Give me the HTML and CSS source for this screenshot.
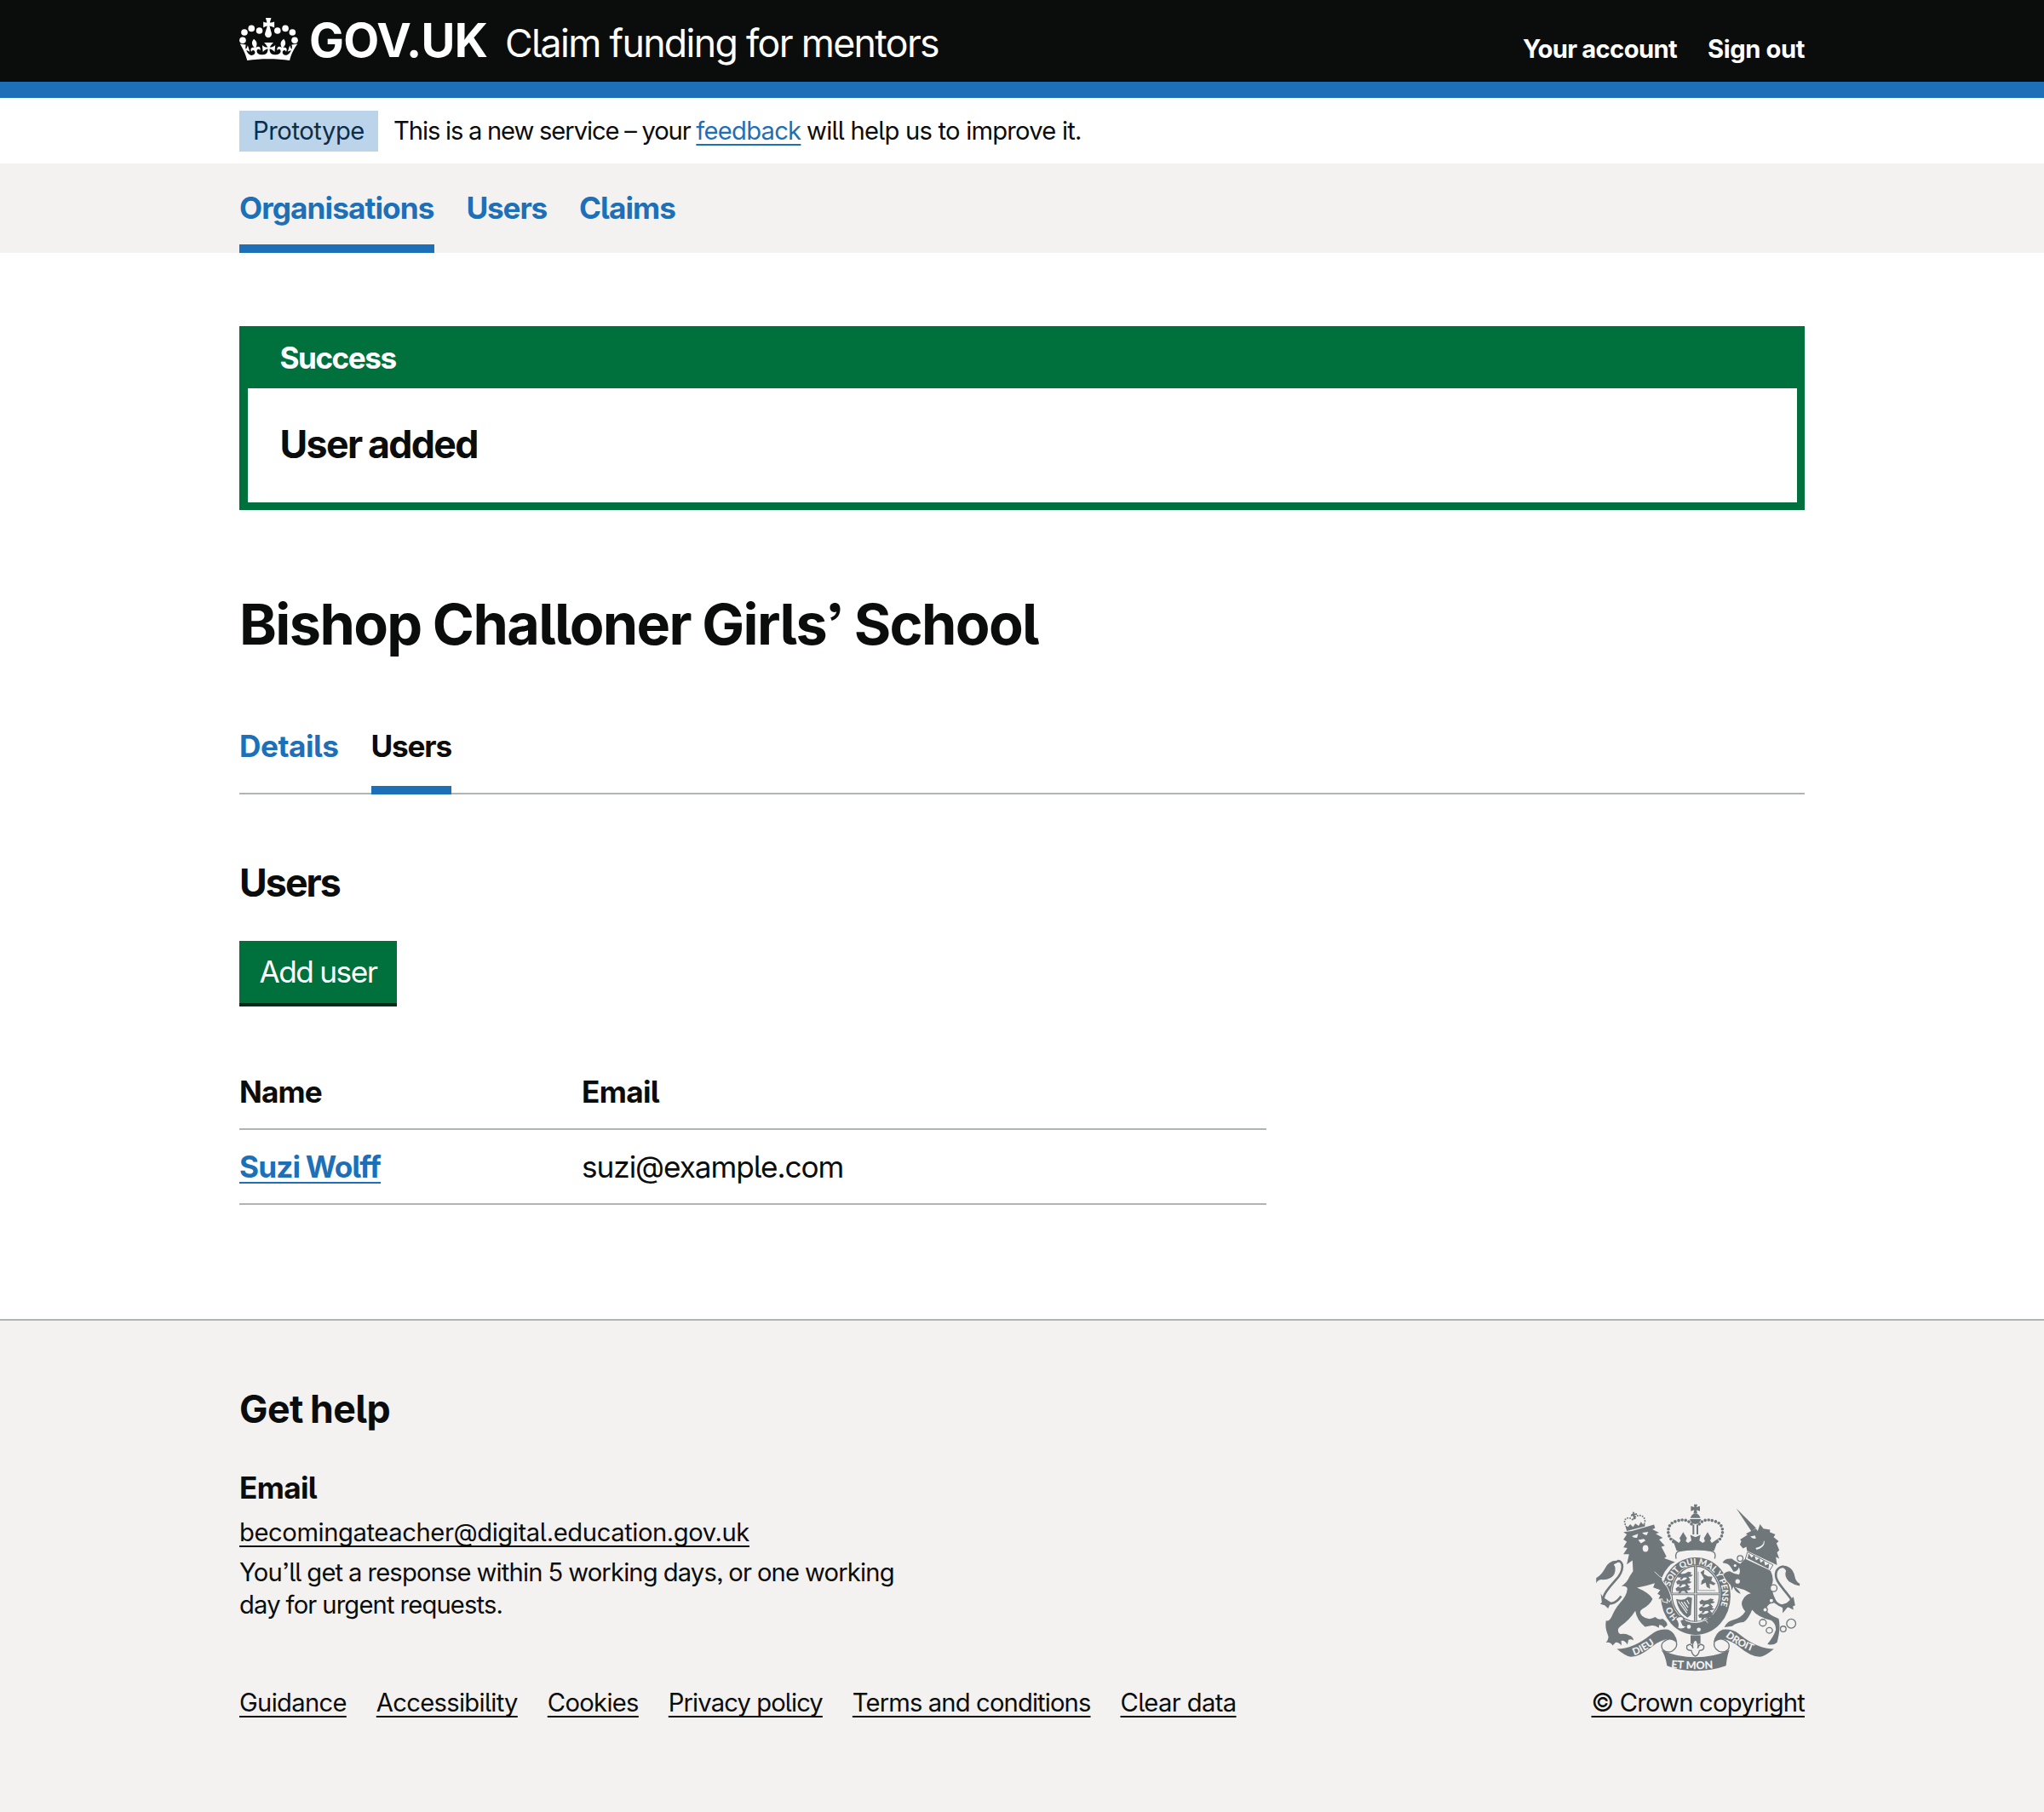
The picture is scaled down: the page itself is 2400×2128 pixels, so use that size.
FILE: index.html
```
<!DOCTYPE html>
<html lang="en">
<head>
<meta charset="utf-8">
<title>Bishop Challoner Girls’ School - Claim funding for mentors</title>
<link rel="stylesheet" href="styles.css">
</head>
<body>
<header class="header">
  <div class="container header-inner">
    <svg class="crown" viewBox="32 63 208 150" aria-hidden="true">
      <circle cx="44" cy="142" r="11.5"/><circle cx="50" cy="114" r="11.5"/><circle cx="75" cy="100" r="11.5"/><circle cx="103" cy="108" r="11.5"/>
      <circle cx="228" cy="142" r="11.5"/><circle cx="220" cy="114" r="11.5"/><circle cx="195" cy="100" r="11.5"/><circle cx="167" cy="108" r="11.5"/>
      <path d="M125 63H145L140 79Q147 80 156 76V97Q147 92 139 91L146 117A12 12 0 1 1 123 117L131 91Q123 92 117 97V76Q123 80 130 79Z"/>
      <path transform="translate(37.4 42) scale(6.1 5.7)" d="M16 29.2c4.4 0 8.6.3 12.3.8 1.1-4.5 2.4-7 4.6-10.3l-3.4.6c.2 1.3.3 1.9 0 2.7-.4-.4-.8-1.1-1.1-2.3l-1.2 4c.7-.5 1.3-.8 2-.9-1.1 2.5-2.6 3.1-3.500 3-1.1-.2-1.7-1.2-1.5-2.1.3-1.2 1.5-1.5 2.1-.1 1.1-2.3-.8-3-2-2.3 1.9-1.9 2.1-3.5.6-5.6-2.1 1.6-2.1 3.2-1.2 5.5-1.2-1.4-3.2-.6-2.5 1.6.9-1.4 2.1-.5 1.9.8-.2 1.1-1.7 2.1-3.5 1.9-2.7-.2-2.9-2.1-2.9-3.6.7-.1 1.9.5 2.9 1.9l.4-4.3c-1.1 1.1-2.1 1.4-3.2 1.4.4-1.2 2.1-3 2.1-3h-5.4s1.7 1.9 2.1 3c-1.1 0-2.1-.2-3.2-1.4l.4 4.3c1-1.4 2.2-2 2.9-1.9-.1 1.5-.2 3.4-2.9 3.6-1.9.2-3.4-.8-3.5-1.9-.2-1.3 1-2.2 1.9-.8.7-2.3-1.2-3-2.5-1.6.9-2.2.9-3.9-1.2-5.5-1.5 2-1.3 3.7.6 5.6-1.2-.7-3.1 0-2 2.3.6-1.4 1.8-1.1 2.1.1.2.9-.3 1.9-1.5 2.1-.9.2-2.4-.5-3.5-3 .6 0 1.2.3 2 .9l-1.2-4c-.3 1.1-.7 1.9-1.1 2.3-.3-.8-.2-1.4 0-2.7l-3.4-.6C1.300 23 2.600 25.500 3.700 30c3.700-.5 7.900-.8 12.300-.8"/>
    </svg>
    <span class="logotype">GOV.UK</span>
    <span class="service">Claim funding for mentors</span>
    <nav class="account">
      <a class="account-main">Your account</a>
      <a class="account-out">Sign out</a>
    </nav>
  </div>
</header>

<div class="container phase">
  <strong class="tag">Prototype</strong>
  <span class="phase-text">This is a new service – your <a class="link feedback">feedback</a> <span class="phase-end">will help us to improve it.</span></span>
</div>

<nav class="primary">
  <div class="container primary-list">
    <a class="primary-item organisations current">Organisations</a>
    <a class="primary-item users">Users</a>
    <a class="primary-item claims">Claims</a>
  </div>
</nav>

<main class="container main">
  <section class="banner">
    <h2 class="banner-title">Success</h2>
    <p class="banner-content">User added</p>
  </section>
  <h1 class="title">Bishop Challoner Girls’ School</h1>
  <nav class="tabs">
    <a class="tab details">Details</a>
    <a class="tab users selected">Users</a>
  </nav>
  <h2 class="subtitle">Users</h2>
  <button class="button" type="button">Add user</button>
  <div class="table">
    <div class="row head"><span class="th-name">Name</span><span class="th-email">Email</span></div>
    <div class="row"><span><a class="link user-link">Suzi Wolff</a></span><span class="email">suzi@example.com</span></div>
  </div>
</main>

<footer class="footer">
  <div class="container footer-grid">
    <div class="footer-main">
      <h2 class="help">Get help</h2>
      <h3 class="help-email">Email</h3>
      <p class="mail"><a class="link">becomingateacher@digital.education.gov.uk</a></p>
      <p class="response">You’ll get a response within 5 working days, or one working<br>day for urgent requests.</p>
      <div class="links">
        <a class="link">Guidance</a><a class="link">Accessibility</a><a class="link">Cookies</a><a class="link privacy">Privacy policy</a><a class="link terms">Terms and conditions</a><a class="link clear">Clear data</a>
      </div>
    </div>
    <div class="copyright">
      <svg class="crest" viewBox="42 50 720 592" aria-hidden="true">
        <defs>
          <path id="ring" d="M330 452A94 108 0 1 1 456 452"/>
          <path id="dieu" d="M176 585Q228 568 290 510"/>
          <path id="droit" d="M498 518Q548 560 626 582"/>
          <path id="mon" d="M290 627Q392 640 496 627"/>
          <path id="beast" d="M0 10l9-8 8 4 12-2 10-6 12 3-5 6 9 3-6 5-10 1 6 8-6 2-8-8-9 1-6 7h-7l4-8-9 1z"/>
        </defs>
        <!-- garter and shield -->
        <ellipse cx="393" cy="376" rx="123" ry="137" class="ink"/>
        <ellipse cx="393" cy="368" rx="88" ry="102" class="paper"/>
        <ellipse cx="393" cy="368" rx="84" ry="98" fill="none" stroke="#6f777b" stroke-width="4"/>
        <path class="ink" d="M387 268h11v96h80v8h-80v94h-11v-94h-80v-8h80z"/>
        <path d="M392.500 270V466M308 368H478" stroke="#f3f2f1" stroke-width="2.500"/>
        <g class="ink">
          <use href="#beast" x="328" y="292"/><use href="#beast" x="324" y="316"/><use href="#beast" x="322" y="340"/>
          <use href="#beast" x="406" y="386"/><use href="#beast" x="404" y="410"/><use href="#beast" x="402" y="434"/>
          <path d="M410 292l14-10-2 16 14 8 16 2-4 14 16 10-8 6-14-6 2 18-12-6-4-16-16 8 2-14 8-8z"/>
          <path d="M324 386Q350 394 366 378L380 382L376 442L364 452Q330 430 324 386Z"/>
        </g>
        <path d="M402 290V356H462" fill="none" stroke="#6f777b" stroke-width="2"/>
        <path d="M332 394L362 436M342 396L364 428M352 396L366 416M362 390L370 404" stroke="#f3f2f1" stroke-width="3.500"/>
        <text class="motto ring"><textPath href="#ring">HO</textPath></text>
        <text class="motto ring"><textPath href="#ring" startOffset="118">SOIT QUI MAL Y PENSE</textPath></text>
        <path class="paper" d="M322 456Q336 444 348 450L352 460L342 464L348 478L360 484Q344 498 328 488Q336 474 322 456Z" stroke="#6f777b" stroke-width="4"/>
        <circle cx="369" cy="484" r="7" class="paper"/><circle cx="404" cy="494" r="7" class="paper"/>
        <path d="M358 462Q394 478 424 458L436 470" fill="none" stroke="#f3f2f1" stroke-width="3"/>
        <!-- lion -->
        <g class="ink">
          <path class="outlined" d="M150 158L138 150L168 146L246 124L250 136L240 140L264 152L252 156L277 170L264 176L284 198L272 202L290 236L282 242L320 256Q304 262 296 274Q280 292 274 310Q270 322 290 342Q300 358 306 384L300 394L290 382L292 398L278 394L276 384L262 386L268 374L258 368L268 354L243 345L249 330Q225 338 186 346Q232 366 241 386Q232 408 204 422Q190 432 204 446Q226 464 250 450Q262 462 276 456Q292 466 293 478L282 488Q272 476 264 478L263 488Q250 478 238 480L214 484Q186 462 180 428Q160 460 128 482Q110 496 126 510Q148 506 158 514Q172 518 174 532Q164 526 156 530L152 547Q142 530 130 534L132 550Q118 536 110 540L100 550Q92 536 76 540Q90 526 82 510Q72 486 77 462Q86 468 96 450Q108 420 126 400Q150 376 152 350Q150 340 131 340Q150 330 160 306L172 288L170 250L150 264L158 228L138 228L152 206L138 204L150 184L138 176Z"/>
          <path d="M130 376C108 408 85 405 72 396C55 380 88 345 112 318C140 288 142 250 116 252" fill="none" stroke="#6f777b" stroke-width="8"/>
          <path d="M128 252Q88 244 72 280Q60 302 42 312V330Q50 316 66 318Q96 318 106 298Q114 278 104 264ZM66 380L58 366L62 398L56 404L72 408L84 420L94 398Z"/>
          <path d="M150 146L144 126L154 132L162 122L172 132L180 120L192 128L200 114L208 124L214 112V130Z"/>
          <path d="M165 88l7-4-3-5 8 0-1 6 9-2 1 7-8-1 4 14-6 2-5-13-7 3z"/>
          <path d="M144 122C136 102 156 92 172 108C180 84 212 86 214 110" fill="none" stroke="#6f777b" stroke-width="6" stroke-linecap="round" stroke-dasharray="0 9"/>
        </g>
        <g class="paper"><path d="M168 164l22-8-4 14q-12 2-18-6zM204 152l22-3-6 12q-10 0-16-9zM190 178l20-4 6 6-16 10z"/><ellipse cx="216" cy="208" rx="10" ry="12"/></g>
        <path d="M248 290Q264 308 284 318" fill="none" stroke="#f3f2f1" stroke-width="2.500"/>
        <!-- unicorn -->
        <g class="ink">
          <path d="M536 66L606 136L590 148Z"/>
          <path d="M586 148L606 138L612 146L620 122L632 138L656 142L654 150L674 158L668 168L686 182L678 190L688 214L680 222L688 244L676 238L680 266L574 216L572 202L560 208L549 194L554 182L550 176L576 160L570 156Z"/>
          <path class="outlined" d="M568 244L658 288Q672 318 660 340Q666 380 684 402Q654 392 640 422Q646 440 686 456Q694 490 680 540Q664 552 646 545Q668 520 676 494Q676 474 660 462Q612 450 592 424Q580 456 562 468Q536 470 522 482L494 486Q504 466 520 462Q556 452 568 430Q548 406 560 388Q570 368 588 366Q560 350 530 344Q546 354 552 368Q534 364 526 342L520 356Q518 340 516 336Q498 320 490 300Q500 288 514 288Q530 300 546 300Q552 290 546 274Q540 290 526 290Q516 268 504 262L488 258Q494 242 520 244Q540 258 550 262Z"/>
          <path d="M664 388C708 432 742 408 728 384C706 350 666 322 678 288C690 266 712 270 722 284" fill="none" stroke="#6f777b" stroke-width="8"/>
          <path d="M696 268Q734 268 742 304Q746 326 760 332V340Q740 336 722 324Q704 306 712 286ZM738 378L744 408L736 412L738 424L718 414L700 436L700 418L688 408L714 400Z"/>
        </g>
        <g class="paper">
          <path d="M586 166l16-4 4 10q-12 4-20-6zM604 206Q632 202 634 180L636 184Q636 206 608 212Z"/>
          <path d="M576 220L666 266L654 286L568 246Z" stroke="#6f777b" stroke-width="3"/>
        </g>
        <path class="ink" d="M576 242L580 226L590 240L600 232L606 250L618 242L622 258L634 250L638 268L652 262L650 280Z"/>
        <g class="link-ring">
          <circle cx="550" cy="243" r="10"/><circle cx="532" cy="268" r="7"/><circle cx="541" cy="324" r="10"/><circle cx="668" cy="348" r="12"/><circle cx="660" cy="392" r="8"/><circle cx="638" cy="424" r="8"/><circle cx="630" cy="470" r="12"/><ellipse cx="653" cy="497" rx="11" ry="10"/><circle cx="702" cy="492" r="10"/><circle cx="730" cy="473" r="16" fill="none"/>
        </g>
        <!-- royal crown -->
        <path class="ink" d="M387 52h12l-3 10 12-4v18l-12-4 3 12h-14l3-12-12 4V58l12 4zM374 100Q380 84 392 84Q404 84 410 100ZM372 104h40q-4 16-20 18-16-2-20-18zM382 124h6v34h-6zM396 124h6v34h-6z"/>
        <path d="M314 184C286 160 292 118 324 112C350 102 368 108 380 124M470 184C498 160 492 118 460 112C434 102 416 108 404 124" fill="none" stroke="#6f777b" stroke-width="11" stroke-linecap="round" stroke-dasharray="0 12.5"/>
        <path class="ink" d="M310 172L334 188L340 180L336 172L349 150L362 172L358 182L366 188L378 180L374 160L392 168L410 160L406 180L418 188L426 182L422 172L435 150L448 172L444 180L450 188L474 172L458 216H326Z"/>
        <path class="paper" d="M336 218Q392 206 450 218Q464 222 458 242Q392 216 328 242Q322 222 336 218Z"/>
        <path class="line" d="M324 244Q318 218 340 216Q392 208 446 216Q468 220 460 244"/>
        <!-- scrolls -->
        <path class="ink" d="M115 562Q172 562 232 514Q262 488 296 494Q322 504 328 540Q314 526 298 528Q268 530 236 556Q196 590 164 590Q146 588 115 562ZM669 562Q612 562 552 514Q522 488 488 494Q462 504 456 540Q470 526 486 528Q516 530 548 556Q588 590 620 590Q638 588 669 562Z"/>
        <g class="scroll"><path d="M298 528Q264 538 276 564Q290 578 310 570Q332 556 324 536Q310 526 298 528ZM486 528Q520 538 508 564Q494 578 474 570Q452 556 460 536Q474 526 486 528Z"/></g>
        <path class="ink" d="M272 566Q330 592 392 592Q454 592 512 566Q504 584 500 622Q450 640 392 640Q334 640 292 622Q286 584 272 566ZM375 514H410V544H375Z"/>
        <path class="scroll" d="M392 528Q406 544 400 560Q408 538 422 552Q424 568 406 568L404 576Q392 600 380 576L378 568Q358 568 362 552Q376 538 384 560Q378 544 392 528Z"/>
        <text class="motto"><textPath href="#dieu">DIEU</textPath></text>
        <text class="motto"><textPath href="#droit">DROIT</textPath></text>
        <text class="motto mon"><textPath href="#mon" startOffset="16">ET MON</textPath></text>
      </svg>
      <a class="link crown-copyright">© Crown copyright</a>
    </div>
  </div>
</footer>
</body>
</html>
```

FILE: styles.css
```
* { box-sizing: border-box; }

body {
  margin: 0;
  min-height: 2128px;
  display: flex;
  flex-direction: column;
  background: #fff;
  color: #0b0c0c;
  font-family: Inter, Roboto, "Liberation Sans", sans-serif;
  font-feature-settings: "cv05", "ss03";
  font-size: 35.2px;
}

h1, h2, h3, p { margin: 0; }

.container { width: 1838px; margin: 0 auto; }

.link {
  text-decoration: underline;
  text-decoration-thickness: 2px;
  text-underline-offset: 5px;
  text-decoration-skip-ink: none;
}

/* Header */
.header { height: 115px; background: #0b0c0c; border-bottom: 19px solid #1d70b8; color: #fff; }
.header-inner { display: flex; align-items: flex-start; height: 96px; }
.crown { width: 69px; height: 50px; margin-top: 21px; fill: #fff; }
.logotype { margin-left: 13px; width: 230px; font-size: 54.5px; line-height: 94px; font-weight: 700; letter-spacing: -0.013em; }
.service { font-size: 44.7px; line-height: 103px; letter-spacing: -0.0375em; white-space: nowrap; }
.account { margin-left: auto; display: flex; gap: 36px; font-size: 29.2px; line-height: 116px; font-weight: 700; }
.account-main { letter-spacing: -0.022em; word-spacing: -0.018em; }
.account-out { letter-spacing: -0.0142em; }

/* Phase banner */
.phase { display: flex; height: 77px; padding-top: 15px; font-size: 29.2px; line-height: 47.5px; }
.tag { width: 163px; height: 48px; margin-right: 18px; background: #bbd4ea; color: #0c2d4a; font-weight: 400; text-align: center; letter-spacing: -0.015em; }
.phase-text { letter-spacing: -0.037em; word-spacing: -0.015em; }
.phase-end { letter-spacing: -0.0265em; word-spacing: 0; }
.feedback { color: #1d70b8; letter-spacing: -0.026em; }

/* Primary navigation */
.primary { background: #f3f2f1; }
.primary-list { display: flex; gap: 38px; height: 105px; line-height: 104px; font-weight: 700; color: #1d70b8; }
.current { box-shadow: inset 0 -10px #1d70b8; }
.organisations { letter-spacing: -0.026em; }
.users { letter-spacing: -0.034em; }
.claims { letter-spacing: -0.027em; }

/* Content */
.main { padding-top: 86px; }
.banner { padding: 0 9.5px 9.5px; background: #00703c; }
.banner-title { height: 72.5px; padding-left: 38px; font-size: 35.2px; line-height: 74.4px; color: #fff; letter-spacing: -0.043em; }
.banner-content { height: 134px; padding-left: 38px; background: #fff; font-size: 44.7px; font-weight: 700; line-height: 132.6px; letter-spacing: -0.037em; word-spacing: -0.03em; }
.title { margin-top: 94px; font-size: 66.5px; line-height: 80px; letter-spacing: -0.0245em; word-spacing: -0.013em; }
.tabs { display: flex; gap: 38px; height: 114px; margin-top: 46px; line-height: 114px; font-weight: 700; box-shadow: inset 0 -2px #b1b4b6; }
.details { color: #1d70b8; letter-spacing: -0.014em; }
.selected { box-shadow: inset 0 -10px #1d70b8; }
.subtitle { margin-top: 79px; font-size: 44.7px; line-height: 50px; letter-spacing: -0.043em; }
.button {
  display: block;
  width: 185px;
  height: 77px;
  margin-top: 43px;
  padding: 0;
  border: 0;
  border-bottom: 4px solid #002d18;
  background: #00703c;
  color: #fff;
  font: inherit;
  font-feature-settings: inherit;
  line-height: 73px;
  letter-spacing: -0.042em;
  word-spacing: -0.015em;
}
.table { width: 1206px; margin-top: 57px; }
.row { display: grid; grid-template-columns: 402px 1fr; height: 88px; line-height: 86px; border-bottom: 2px solid #b1b4b6; }
.head { font-weight: 700; }
.th-name { letter-spacing: -0.024em; }
.th-email, .help-email { letter-spacing: -0.019em; }
.user-link { color: #1d70b8; font-weight: 700; letter-spacing: -0.025em; word-spacing: -0.023em; }
.email { letter-spacing: -0.03em; }

/* Footer */
.footer { flex: 1; margin-top: 134px; padding-top: 79px; border-top: 2px solid #b1b4b6; background: #f3f2f1; font-size: 29.2px; line-height: 40px; }
.footer-grid { display: flex; justify-content: space-between; align-items: flex-end; }
.help { font-size: 44.7px; line-height: 50px; letter-spacing: -0.014em; word-spacing: -0.034em; }
.help-email { margin-top: 46.5px; font-size: 35.2px; line-height: 40px; }
.mail { margin-top: 13px; letter-spacing: -0.0143em; }
.response { margin-top: 8px; line-height: 38.3px; letter-spacing: -0.0285em; word-spacing: -0.02em; }
.links { display: flex; gap: 35px; margin-top: 76px; letter-spacing: -0.0236em; }
.privacy { letter-spacing: -0.0305em; }
.terms { letter-spacing: -0.0298em; }
.clear { letter-spacing: -0.021em; }
.copyright { width: 250.5px; display: flex; flex-direction: column; align-items: center; }
.crest { width: 240px; height: 197px; margin-bottom: 17px; }
.crown-copyright { letter-spacing: -0.0275em; white-space: nowrap; }
.ink { fill: #6f777b; }
.paper { fill: #f3f2f1; }
.outlined { stroke: #f3f2f1; stroke-width: 5; paint-order: stroke; }
.line { fill: none; stroke: #6f777b; stroke-width: 4; }
.link-ring { fill: #f3f2f1; stroke: #6f777b; stroke-width: 4; }
.scroll { fill: #f3f2f1; stroke: #6f777b; stroke-width: 4; }
.motto { fill: #f3f2f1; font: 900 35px Lato, sans-serif; }
.ring { font-size: 30px; }
.mon { font-size: 38px; }
```
